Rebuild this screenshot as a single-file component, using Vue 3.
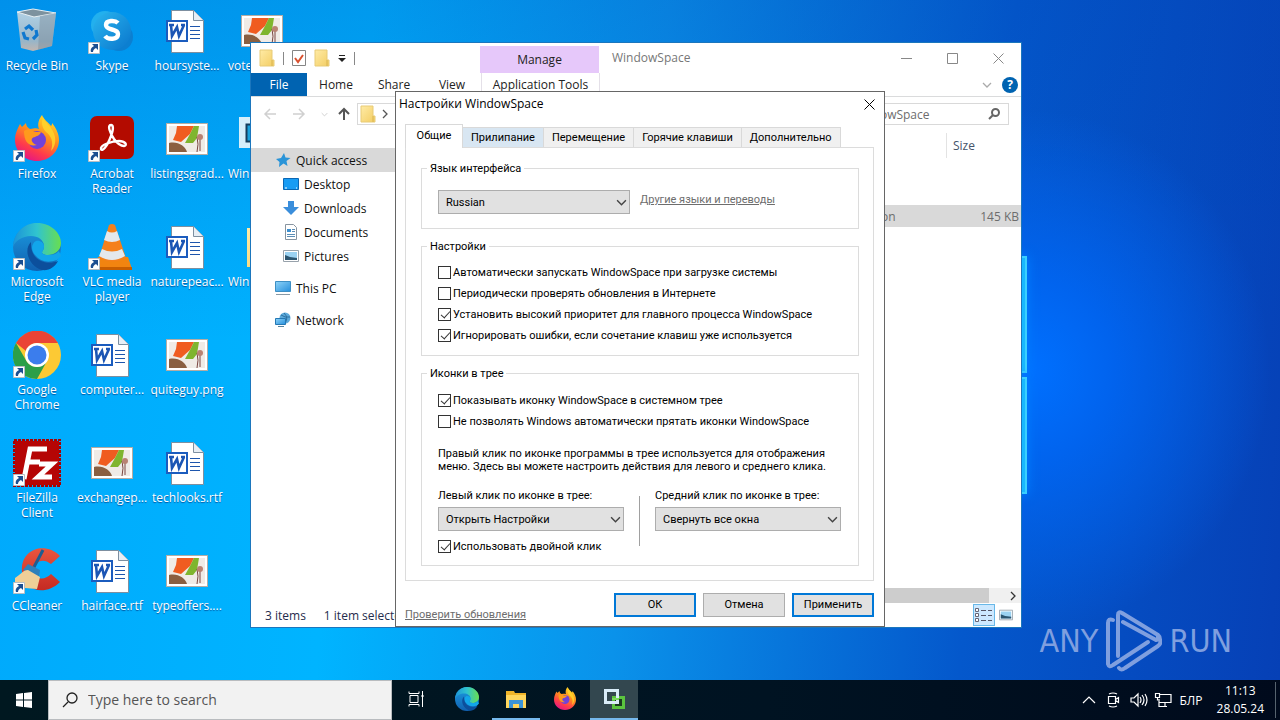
<script setup>
import { ref } from 'vue'

const desktopIcons = [
  { icon: 'bin', label: 'Recycle Bin' },
  { icon: 'firefox', label: 'Firefox', link: true },
  { icon: 'edge', label: 'Microsoft Edge', link: true },
  { icon: 'chrome', label: 'Google Chrome', link: true },
  { icon: 'filezilla', label: 'FileZilla Client', link: true },
  { icon: 'ccleaner', label: 'CCleaner', link: true },
  { icon: 'skype', label: 'Skype', link: true },
  { icon: 'acrobat', label: 'Acrobat Reader', link: true },
  { icon: 'vlc', label: 'VLC media player', link: true },
  { icon: 'word', label: 'computer...' },
  { icon: 'photo', label: 'exchangep...' },
  { icon: 'word', label: 'hairface.rtf' },
  { icon: 'word', label: 'hoursyste...' },
  { icon: 'photo', label: 'listingsgrad...' },
  { icon: 'word', label: 'naturepeac...' },
  { icon: 'photo', label: 'quiteguy.png' },
  { icon: 'word', label: 'techlooks.rtf' },
  { icon: 'photo', label: 'typeoffers....' },
  { icon: 'photo', label: 'votes...', start: true },
  { icon: 'wsapp', label: 'Window...', start: true },
  { icon: 'bigfolder', label: 'Window...', start: true },
]

const quickItems = [
  { icon: 'desk', label: 'Desktop' },
  { icon: 'down', label: 'Downloads' },
  { icon: 'doc', label: 'Documents' },
  { icon: 'pic', label: 'Pictures' },
]

const tabs = ['Общие', 'Прилипание', 'Перемещение', 'Горячие клавиши', 'Дополнительно']
const activeTab = ref(0)

const settings = ref([
  { label: 'Автоматически запускать WindowSpace при загрузке системы', on: false },
  { label: 'Периодически проверять обновления в Интернете', on: false },
  { label: 'Установить высокий приоритет для главного процесса WindowSpace', on: true },
  { label: 'Игнорировать ошибки, если сочетание клавиш уже используется', on: true },
])
const tray = ref([
  { label: 'Показывать иконку WindowSpace в системном трее', on: true },
  { label: 'Не позволять Windows автоматически прятать иконки WindowSpace', on: false },
])
const doubleClick = ref(true)
</script>

<template>
  <div class="screen">
    <svg class="defs" aria-hidden="true">
      <defs>
        <linearGradient id="gBin" x1="0" y1="0" x2="0" y2="1"><stop offset="0" stop-color="#c3d7e4" /><stop offset=".75" stop-color="#a9b9c4" /><stop offset="1" stop-color="#d8b9a8" /></linearGradient>
        <linearGradient id="gSkype" x1="0" y1="0" x2="1" y2="1"><stop offset="0" stop-color="#29b6f0" /><stop offset="1" stop-color="#0a76cc" /></linearGradient>
        <linearGradient id="gFox" x1=".8" y1="0" x2=".3" y2="1"><stop offset="0" stop-color="#ffe226" /><stop offset=".45" stop-color="#ff8a1e" /><stop offset=".75" stop-color="#ff3b4b" /><stop offset="1" stop-color="#e31587" /></linearGradient>
        <linearGradient id="gEdgeA" x1="0" y1="0" x2="1" y2="0"><stop offset="0" stop-color="#1c93d8" /><stop offset=".5" stop-color="#30c4cf" /><stop offset="1" stop-color="#6ade4e" /></linearGradient>
        <linearGradient id="gEdgeB" x1="0" y1="0" x2="0" y2="1"><stop offset="0" stop-color="#1b9de2" /><stop offset="1" stop-color="#1160b0" /></linearGradient>
        <linearGradient id="gFolder" x1="0" y1="0" x2="1" y2="1"><stop offset="0" stop-color="#ffeba6" /><stop offset="1" stop-color="#f3cd62" /></linearGradient>
        <linearGradient id="gScreen" x1="0" y1="0" x2="1" y2="1"><stop offset="0" stop-color="#8ed3f8" /><stop offset="1" stop-color="#268fdc" /></linearGradient>
        <linearGradient id="gCC" x1="0" y1="0" x2="0" y2="1"><stop offset="0" stop-color="#e9553e" /><stop offset="1" stop-color="#c52a22" /></linearGradient>
      </defs>
      <symbol id="i-bin" viewBox="0 0 48 48">
        <path d="M4 5 24 9l19-3-4 33-19 5L8 41Z" fill="url(#gBin)" opacity=".9" />
        <path d="m4 5 16-3 23 4-22 4Z" fill="#7d929f" stroke="#e8f0f4" />
        <path d="m27 9 16-3-4 33-14 4Z" fill="#7c8b99" opacity=".45" />
        <path d="m12 22 4-3 4 4M10 25l2 6 4 1m4 0 4-4-1-5" fill="none" stroke="#0f78cf" stroke-width="3.200" />
      </symbol>
      <symbol id="i-skype" viewBox="0 0 48 48">
        <circle cx="17" cy="18" r="14" fill="#22b0ee" /><circle cx="31" cy="30" r="14" fill="#0c7fd0" /><circle cx="24" cy="24" r="19" fill="url(#gSkype)" />
        <path d="M30 16c-3-3-12-3-12 2 0 6 12 3 12 9 0 6-10 6-13 2" fill="none" stroke="#fff" stroke-width="4.400" />
      </symbol>
      <symbol id="i-firefox" viewBox="0 0 48 48">
        <path d="M29 0c2 5 6 7 9 11 1-1 1-2 1-3 5 6 7 12 7 17 0 12-10 21-22 21S2 37 2 25c0-7 3-12 5-16l2 3 4-4c0 3 2 5 4 6 5-1 7-1 9 0-2-5 0-10 3-14Z" fill="url(#gFox)" />
        <circle cx="24" cy="25" r="9" fill="#7242d8" />
        <path d="M11 16c4-3 8-2 10 1h7c-1 4-5 4-6 5-6 1-3 7 2 8-8 2-13-3-13-14Z" fill="#ff9a1c" />
        <path d="M30 2c2 6 10 10 12 20 1 6-1 11-4 14 3-10 0-15-5-19-4-4-5-9-3-15Z" fill="#ffd52b" opacity=".85" />
      </symbol>
      <symbol id="i-edge" viewBox="0 0 48 48">
        <circle cx="24" cy="24" r="24" fill="url(#gEdgeB)" />
        <path d="M0 24C1 10 11 0 24 0c14 0 24 10 24 20 0 8-7 12-13 12-5 0-6-2-6-3 1-2 2-3 2-6 0-6-6-10-13-10C9 13 2 18 0 24Z" fill="url(#gEdgeA)" />
        <path d="M31 23c0 3-1 4-2 6 0 1 1 3 6 3 5 0 8-1 11-4l2 5-4 4q-14 5-22-5c-5-6-3-12 1-14 4-1 8 2 8 5Z" fill="#12a6ea" />
        <path d="M18 19c-8 8-2 24 11 28 7 1 13-3 16-9-9 4-20 1-24-6-3-5-3-9-3-13Z" fill="#0c4f9c" />
      </symbol>
      <symbol id="i-chrome" viewBox="0 0 48 48">
        <circle cx="24" cy="24" r="24" fill="#fcc934" />
        <path d="M3 12A24 24 0 0 1 45 12H24a12 12 0 0 0-11 8Z" fill="#ea4335" />
        <path d="M3 12a24 24 0 0 0 21 36l10-18a12 12 0 0 1-20 1Z" fill="#2c9f48" />
        <circle cx="24" cy="24" r="12" fill="#fff" /><circle cx="24" cy="24" r="9.500" fill="#3b7ded" />
      </symbol>
      <symbol id="i-filezilla" viewBox="0 0 48 48">
        <rect x="2" y="2" width="44" height="44" fill="#b50505" /><rect x="1" y="1" width="46" height="46" fill="none" stroke="#a80000" stroke-width="2" stroke-dasharray="3 1" />
        <path d="M11 40 17 10h17M13 23h14M26 25h13L25 38h14" fill="none" stroke="#fff" stroke-width="5" />
      </symbol>
      <symbol id="i-ccleaner" viewBox="0 0 48 48">
        <path d="M47 9C32-6 7 2 9 25c2 20 24 24 38 10l-9-8c-7 7-16 6-16-4s9-12 16-6Z" fill="url(#gCC)" />
        <path d="m30 3-9 17" stroke="#1d5d91" stroke-width="3" /><path d="m15 17 12 6-1 8-16-8Z" fill="#2e80bb" />
        <path d="M2 31c5-3 8-8 13-8l12 7-3 12-12-1-10 2Z" fill="#efcf98" />
      </symbol>
      <symbol id="i-acrobat" viewBox="0 0 48 48">
        <rect x="2" y="1" width="44" height="43" rx="7" fill="#b30b00" />
        <path d="M23 10c-4 0-1 8 3 14 3 4 7 7 10 7 4-1 1-5-5-5-7 0-19 4-18 8 1 3 6-2 10-13 3-8 2-11 0-11Z" fill="none" stroke="#fff" stroke-width="2.400" />
      </symbol>
      <symbol id="i-vlc" viewBox="0 0 48 48">
        <path d="m10 34-4 12h38l-4-12Z" fill="#f28410" /><path d="M6 44h38v3H6Z" fill="#c95e00" />
        <path d="M21 2q3-2 6 0l11 33q-13 7-27 0Z" fill="#f5801b" />
        <path d="m19 8-3 9q8 4 16 0l-3-9q-5 3-10 0Zm-5 18-3 7q13 8 26 0l-3-7q-10 5-20 0Z" fill="#e4e8ec" />
      </symbol>
      <symbol id="i-word" viewBox="0 0 48 48">
        <path d="M8.500 3.500h22l10 10v32h-32Z" fill="#fff" stroke="#7d8fa0" /><path d="M30.500 3.500v10h10" fill="#e7eef5" stroke="#7d8fa0" />
        <path d="M27 19.500h10M27 23.500h10M27 27.500h10M27 31.500h10" stroke="#1e56ad" />
        <rect x="4" y="14" width="20" height="20" fill="#fff" stroke="#1b5cbe" stroke-width="2" />
        <path d="m8 18 1 11 5-9 2 9 5-11M6 18h5m7 0h4" fill="none" stroke="#1b55b4" stroke-width="2.600" />
      </symbol>
      <symbol id="i-photo" viewBox="0 0 48 48">
        <rect x="3.500" y="8.500" width="41" height="31" fill="#fff" stroke="#b4aca4" /><rect x="6" y="11" width="36" height="26" fill="#f0ebe6" />
        <path d="m14 11 17 0-4 8-9 8-8-2 3-7Z" fill="#f05c20" /><path d="m31 11 5 0-2 12-4 5-8 0 5-9Z" fill="#7fb52e" />
        <path d="M6 28c9-2 16 3 18 9H6Z" fill="#8a5f41" /><path d="M34 22q2 7 0 15m3-14v13" stroke="#7a4540" fill="none" /><circle cx="37" cy="22" r="3" fill="#b98272" />
      </symbol>
      <symbol id="i-wsapp" viewBox="0 0 48 48">
        <rect x="1" y="2" width="46" height="31" fill="#d6effa" /><rect x="8.500" y="9.500" width="20" height="17" fill="#1aa2dc" stroke="#173e5c" stroke-width="2" />
      </symbol>
      <symbol id="i-bigfolder" viewBox="0 0 48 48"><path d="M9 5h14l4 4h17v35H9Z" fill="url(#gFolder)" /></symbol>
      <symbol id="i-link" viewBox="0 0 12 12"><path d="M.5.500h11v11H.500Z" fill="#fff" stroke="#b8bec4" /><path d="M4 2h6v6L8 6c-2 1-3 2-3 4H3c-1-3 1-5 3-6Z" fill="#1c4f91" /></symbol>
      <symbol id="i-folder" viewBox="0 0 16 18"><path d="M1 1h12v10h2v6H1Z" fill="url(#gFolder)" stroke="#e8cb76" /><path d="M13 11v6" stroke="#d8b450" /></symbol>
      <symbol id="i-star" viewBox="0 0 16 16"><path d="m9 1 1.500 4.500 5 .5-4 3 1 5-4-2.500L4 15l.5-5L1 7l5-1Z" fill="#2a94d8" /></symbol>
      <symbol id="i-desk" viewBox="0 0 16 16"><path d="M.5 2.500h15v11H.500Z" fill="#189cf4" stroke="#0b67b4" /><path d="M2 12h2m9 0h1" stroke="#fff" /></symbol>
      <symbol id="i-down" viewBox="0 0 16 16"><path d="M5 1h6v6h5l-8 8-8-8h5Z" fill="#3a8edb" /></symbol>
      <symbol id="i-doc" viewBox="0 0 16 16"><path d="M2.500.500h8l3 3v12h-11Z" fill="#fff" stroke="#8794a0" /><path d="M4 5h4v3H4Z" fill="#3b8fd0" /><path d="M9 5.500h3M4 10.500h8M4 12.500h8M9 7.500h3" stroke="#5b8db5" /></symbol>
      <symbol id="i-pic" viewBox="0 0 16 16"><path d="M.5 2.500h15v11H.500Z" fill="#fff" stroke="#98a2ab" /><path d="M2 4h12v8H2Z" fill="#9bd2f2" /><path d="m2 7 5 2 7 1v2H2Z" fill="#2c5570" /></symbol>
      <symbol id="i-pc" viewBox="0 0 16 16"><path d="M.5 1.500h15v10H.500Z" fill="url(#gScreen)" stroke="#3d8fc4" /><path d="M1 14.500h14" stroke="#8999a5" /></symbol>
      <symbol id="i-net" viewBox="0 0 16 16"><circle cx="10" cy="6" r="5.500" fill="#5daadb" /><path d="M6 3q4 3 9 2M9 1q5 5 1 10" stroke="#2a6f9f" fill="none" /><path d="M.5 6.500h10v6H.500Z" fill="url(#gScreen)" stroke="#2478b4" /><path d="M3 14.500h6" stroke="#56839e" /></symbol>
      <symbol id="i-chev" viewBox="0 0 10 10"><path d="m1 3 4 4 4-4" fill="none" stroke="currentColor" stroke-width="1.300" /></symbol>
    </svg>

    <main class="desktop">
      <ul class="icons">
        <li v-for="(d, i) in desktopIcons" :key="i" :class="{ start: d.start }">
          <div class="pict">
            <svg class="big"><use :href="'#i-' + d.icon" /></svg>
            <svg v-if="d.link" class="arrow"><use href="#i-link" /></svg>
          </div>
          <span>{{ d.label }}</span>
        </li>
      </ul>

      <div class="pane p1"></div>
      <div class="pane p2"></div>

      <div class="mark">
        <span>ANY</span>
        <svg viewBox="0 0 57 64"><g fill="none" stroke="currentColor" stroke-width="4" stroke-linecap="round" stroke-linejoin="round"><path d="M8 11q-5-2-5 3v41q1 4 5 1l35-23" /><path d="M13 47V6q0-4 4-2l36 22q4 4-2 5L18 13" /><path d="M14 59q2 3 6 0l33-22q5-4 0-9" /></g></svg>
        <span>RUN</span>
      </div>

      <section class="explorer">
        <header class="titlebar">
          <div class="quick">
            <svg class="fold"><use href="#i-folder" /></svg><i class="bar"></i>
            <svg class="props" viewBox="0 0 14 16"><path d="M.5.500h13v15H.500Z" fill="#fff" stroke="#858585" /><path d="m3 8 3 4 5-7" fill="none" stroke="#d9502e" stroke-width="2" /></svg>
            <svg class="fold"><use href="#i-folder" /></svg>
            <svg class="cust" viewBox="0 0 8 8"><path d="M1 1.500h6" stroke="#222" /><path d="M0 4h8L4 8Z" fill="#222" /></svg><i class="bar"></i>
          </div>
          <div class="manage">Manage</div>
          <div class="wtitle">WindowSpace</div>
          <button class="ctl" aria-label="Minimize"><svg viewBox="0 0 11 11"><path d="M0 5.500h11" /></svg></button>
          <button class="ctl" aria-label="Maximize"><svg viewBox="0 0 11 11"><path d="M.5.500h10v10H.500Z" /></svg></button>
          <button class="ctl" aria-label="Close"><svg viewBox="0 0 11 11"><path d="m.5.500 10 10m0-10-10 10" /></svg></button>
        </header>
        <nav class="ribbon">
          <button class="file">File</button>
          <button>Home</button>
          <button>Share</button>
          <button>View</button>
          <button class="apptools">Application Tools</button>
          <svg class="rchev"><use href="#i-chev" /></svg>
          <button class="help" aria-label="Help">?</button>
        </nav>
        <div class="address">
          <svg class="nav" viewBox="0 0 14 14"><path d="M13 7H2m5-5L2 7l5 5" /></svg>
          <svg class="nav" viewBox="0 0 14 14"><path d="M1 7h11M7 2l5 5-5 5" /></svg>
          <svg class="tiny"><use href="#i-chev" /></svg>
          <svg class="nav up" viewBox="0 0 14 14"><path d="M7 13V2M2 7l5-5 5 5" /></svg>
          <div class="path"><svg class="fold"><use href="#i-folder" /></svg><svg class="crumb"><use href="#i-chev" /></svg></div>
          <label class="search">
            <input type="text" placeholder="Search WindowSpace" aria-label="Search WindowSpace" />
            <svg viewBox="0 0 12 12"><circle cx="7.500" cy="4.500" r="3.500" /><path d="m5 7-4 4" /></svg>
          </label>
        </div>
        <div class="body">
          <ul class="tree">
            <li class="sel"><svg><use href="#i-star" /></svg>Quick access</li>
            <li v-for="q in quickItems" :key="q.label" class="sub"><svg><use :href="'#i-' + q.icon" /></svg>{{ q.label }}</li>
            <li class="gap"><svg><use href="#i-pc" /></svg>This PC</li>
            <li class="gap"><svg><use href="#i-net" /></svg>Network</li>
          </ul>
          <div class="files">
            <table>
              <colgroup><col /><col class="ctype" /><col class="csize" /></colgroup>
              <thead><tr><th></th><th></th><th><span>Size</span></th></tr></thead>
              <tbody>
                <tr><td></td><td></td><td></td></tr>
                <tr><td></td><td></td><td></td></tr>
                <tr class="sel"><td></td><td>Application</td><td class="num">145 KB</td></tr>
              </tbody>
            </table>
            <div class="scroll"><div class="thumb"></div><svg><use href="#i-chev" /></svg></div>
          </div>
        </div>
        <footer class="status">
          <span>3 items</span><span>1 item selected</span>
          <button class="view on" aria-label="Details"><svg viewBox="0 0 18 14"><path d="M.5.500h3v3h-3Zm0 5h3v3h-3Zm0 5h3v3h-3Z" fill="#fff" stroke="#667" /><path d="M6 2.500h5m2 0h4M6 7.500h5m2 0h4M6 12.500h5m2 0h4" stroke="#556" /></svg></button>
          <button class="view" aria-label="Large icons"><svg viewBox="0 0 16 16"><use href="#i-pic" /></svg></button>
        </footer>
      </section>

      <section class="dialog" role="dialog" aria-labelledby="dlg-title">
        <header class="dtitle">
          <h1 id="dlg-title">Настройки WindowSpace</h1>
          <button aria-label="Закрыть"><svg viewBox="0 0 11 11"><path d="m.5.500 10 10m0-10-10 10" /></svg></button>
        </header>
        <div class="tabs" role="tablist">
          <button v-for="(t, i) in tabs" :key="t" role="tab" :aria-selected="activeTab === i" :class="{ active: activeTab === i, hover: i === 1 }" @click="activeTab = i">{{ t }}</button>
        </div>
        <div class="sheet">
          <fieldset class="lang">
            <legend>Язык интерфейса</legend>
            <span class="select wide"><select aria-label="Язык интерфейса"><option>Russian</option></select><svg><use href="#i-chev" /></svg></span>
            <a href="#">Другие языки и переводы</a>
          </fieldset>
          <fieldset class="opts">
            <legend>Настройки</legend>
            <label v-for="s in settings" :key="s.label"><input v-model="s.on" type="checkbox" />{{ s.label }}</label>
          </fieldset>
          <fieldset class="trayset">
            <legend>Иконки в трее</legend>
            <label v-for="s in tray" :key="s.label"><input v-model="s.on" type="checkbox" />{{ s.label }}</label>
            <p>Правый клик по иконке программы в трее используется для отображения<br />меню. Здесь вы можете настроить действия для левого и среднего клика.</p>
            <div class="cols">
              <div>
                <label class="cap" for="left">Левый клик по иконке в трее:</label>
                <span class="select"><select id="left"><option>Открыть Настройки</option></select><svg><use href="#i-chev" /></svg></span>
              </div>
              <div class="divider"></div>
              <div>
                <label class="cap" for="mid">Средний клик по иконке в трее:</label>
                <span class="select"><select id="mid"><option>Свернуть все окна</option></select><svg><use href="#i-chev" /></svg></span>
              </div>
            </div>
            <label><input v-model="doubleClick" type="checkbox" />Использовать двойной клик</label>
          </fieldset>
        </div>
        <footer class="actions">
          <a href="#">Проверить обновления</a>
          <button class="blue">ОК</button>
          <button>Отмена</button>
          <button class="blue">Применить</button>
        </footer>
      </section>
    </main>

    <footer class="taskbar">
      <button class="win" aria-label="Start"><svg viewBox="0 0 16 16"><path d="m0 2 7-1v6.500H0Zm8-1 8-1v7.500H8ZM0 8.500h7V15l-7-1Zm8 0h8V16l-8-1Z" fill="#fff" /></svg></button>
      <label class="tsearch">
        <svg viewBox="0 0 16 16"><circle cx="10" cy="6" r="5" /><path d="m6 10-5 5" /></svg>
        <input type="text" placeholder="Type here to search" aria-label="Type here to search" />
      </label>
      <button class="task first" aria-label="Task View"><svg class="tv" viewBox="0 0 16 16"><path d="M2 4.500h8v7H2ZM1 .500v2h10v-2M1 15.500v-2h10v2M14.500 0v16M13 5h3" fill="none" stroke="#fff" /></svg></button>
      <button class="task" aria-label="Microsoft Edge"><svg><use href="#i-edge" /></svg></button>
      <button class="task open" aria-label="File Explorer"><svg class="fe" viewBox="0 0 22 20"><path d="M1 2h8l1 2h11v15H1Z" fill="#f0b429" /><path d="M1 6h20v13H1Z" fill="#ffd65c" /><path d="M4 19v-8h14v8h-4v-4H8v4Z" fill="#3a94d8" /></svg></button>
      <button class="task" aria-label="Firefox"><svg><use href="#i-firefox" /></svg></button>
      <button class="task open active" aria-label="WindowSpace"><svg viewBox="0 0 24 24"><path d="M11.500 10.500h10v10h-10Z" fill="#1b3b20" stroke="#5bc43f" stroke-width="3" /><path d="M3.500 3.500h12v12h-12Z" fill="none" stroke="#d9ecf8" stroke-width="3" /><path d="M10 12h7" stroke="#7cd95d" stroke-width="2" /></svg></button>
      <div class="tray">
        <svg viewBox="0 0 14 14"><path d="m1 10 6-6 6 6" /></svg>
        <svg viewBox="0 0 14 16"><path d="M2.500 4.500h7v7h-7Zm7 3 3-2v5l-3-2M3 2q4-2 8 0M3 14q4 2 8 0" /></svg>
        <svg class="wide" viewBox="0 0 18 14"><path d="M1 5h3l4-4v12L4 9H1Zm9-1q2 3 0 6m2-8q4 5 0 10m3-11q4 6 0 12" /></svg>
        <svg class="wide" viewBox="0 0 18 16"><path d="M6 2.500h11v8H5M5 7v7.500h8M11 11v3M1.500 1.500h4v4h-4Zm2 4v3" /></svg>
        <span class="lng">БЛР</span>
        <time>11:13<br />28.05.24</time>
      </div>
    </footer>
  </div>
</template>

<style>
body { overflow: hidden; }
</style>

<style scoped>
.screen { display: flex; flex-direction: column; min-height: 100vh; font: 12px/15px "Open Sans", "Noto Sans", sans-serif; }
.screen * { box-sizing: border-box; }
.defs { position: absolute; width: 0; height: 0; }
button, input, select { font: inherit; color: inherit; margin: 0; padding: 0; border: 0; background: none; border-radius: 0; outline: 0; }
ul { list-style: none; margin: 0; padding: 0; }
svg { display: block; flex: none; }

.desktop {
  position: relative; flex: 1; overflow: hidden;
  background:
    radial-gradient(ellipse 240px 260px at 1030px 370px, #0070ff 0, #0068f8cc 35%, #0060f000 100%),
    linear-gradient(to bottom, #0048b840 0, #0048b800 50%),
    linear-gradient(95deg, #00a9fc 0, #00b4ff 28%, #0a92ea 50%, #0458cc 76%, #0640b6 100%);
}
.icons { display: grid; grid-auto-flow: column; grid-template-rows: repeat(6, 108px); grid-auto-columns: 75px; width: max-content; }
.icons li { display: flex; flex-direction: column; align-items: center; padding: 7px 1px 0 0; color: #fff; text-align: center; text-shadow: 0 1px 1px #0056a0; white-space: nowrap; }
.icons span { margin-top: 3px; width: 66px; white-space: normal; overflow-wrap: normal; display: flex; justify-content: center; }
.icons .start span { justify-content: flex-start; width: 68px; white-space: nowrap; }
.pict { position: relative; }
.big { width: 48px; height: 48px; }
.arrow { position: absolute; left: 0; top: 35px; width: 12px; height: 12px; }
.pane { position: absolute; left: 1000px; width: 27px; height: 117px; background: #18b8ff; border: 2px solid #3ad0ff; box-shadow: 0 0 12px #0080ff; }
.p1 { top: 256px; }
.p2 { top: 377px; }
.mark { position: absolute; right: 48px; bottom: 7px; display: flex; align-items: center; gap: 7px; color: #7f9fdf; font: 32px/64px "Liberation Sans Narrow", "DejaVu Sans Condensed", sans-serif; }
.mark svg { width: 57px; height: 64px; }

.explorer { position: absolute; left: 250px; top: 42px; width: 772px; height: 586px; display: flex; flex-direction: column; background: #fff; border: 1px solid #1b76bd; color: #222; }
.titlebar { display: flex; height: 30px; }
.quick { display: flex; align-items: center; width: 229px; padding-left: 8px; gap: 8px; }
.quick .bar { width: 1px; height: 13px; background: #888; }
.fold { width: 16px; height: 18px; }
.props { width: 14px; height: 16px; }
.cust { width: 8px; height: 8px; }
.manage { width: 119px; margin-top: 3px; background: #e6c8fa; text-align: center; line-height: 28px; }
.wtitle { flex: 1; padding-left: 13px; line-height: 30px; color: #777; }
.ctl { width: 46px; display: grid; place-items: center; }
.ctl svg { width: 11px; height: 11px; fill: none; stroke: #888; }
.ribbon { display: flex; align-items: center; height: 24px; border-bottom: 1px solid #dadbdc; }
.ribbon button { width: 58px; height: 23px; }
.ribbon .file { width: 56px; background: #0063b1; color: #fff; }
.ribbon .apptools { width: 119px; border: 1px solid #e4e0e8; border-width: 0 1px; }
.rchev { width: 10px; height: 10px; margin-left: auto; color: #aaa; }
.ribbon .help { width: 16px; height: 16px; margin: 0 3px 0 10px; border-radius: 50%; background: #0063b1; color: #fff; font-weight: 700; line-height: 15px; }
.address { display: flex; align-items: center; height: 34px; padding: 0 12px; }
.nav { width: 14px; height: 14px; margin-right: 15px; fill: none; stroke: #d0d0d0; stroke-width: 1.5; }
.nav.up { margin: 0 6px 0 9px; stroke: #555; stroke-width: 2; }
.tiny { width: 7px; height: 7px; color: #ccc; }
.path { display: flex; align-items: center; flex: 1; height: 22px; padding-left: 2px; gap: 4px; border: 1px solid #d9d9d9; }
.crumb { width: 10px; height: 10px; transform: rotate(-90deg); color: #555; }
.search { display: flex; align-items: center; width: 206px; height: 22px; margin-left: 8px; padding: 0 8px 0 6px; border: 1px solid #d9d9d9; }
.search input { flex: 1; min-width: 0; }
.search input::placeholder { color: #6d6d6d; opacity: 1; }
.search svg { width: 12px; height: 12px; fill: none; stroke: #666; stroke-width: 2; }
.body { display: flex; flex: 1; min-height: 0; }
.tree { width: 146px; padding-top: 17px; color: #111; }
.tree li { display: flex; align-items: center; height: 24px; padding-left: 24px; gap: 5px; }
.tree svg { width: 16px; height: 16px; }
.tree .sub { padding-left: 32px; }
.tree .sel, .files .sel { background: #d9d9d9; }
.tree .gap { margin-top: 8px; }
.files { display: flex; flex-direction: column; flex: 1; }
table { width: 100%; border-collapse: collapse; table-layout: fixed; }
.ctype { width: 119px; }
.csize { width: 75px; }
th { height: 30px; padding: 2px 0 3px; font-weight: 400; text-align: left; color: #45546b; }
th span { display: block; border-left: 1px solid #e3e3e3; padding-left: 6px; line-height: 25px; }
td { height: 22px; padding: 0 2px 0 6px; color: #6d6d6d; }
.num { text-align: right; white-space: nowrap; }
.scroll { display: flex; align-items: center; justify-content: space-between; height: 15px; margin-top: auto; background: #f0f0f0; }
.scroll .thumb { width: calc(100% - 32px); height: 15px; background: #cdcdcd; }
.scroll svg { width: 10px; height: 10px; margin-right: 3px; transform: rotate(-90deg); color: #333; stroke-width: 2; }
.status { display: flex; align-items: center; height: 24px; padding: 0 4px 0 14px; gap: 18px; color: #1f2c4d; }
.view { display: grid; place-items: center; width: 22px; height: 22px; }
.view svg { width: 14px; height: 14px; }
.view.on { margin-left: auto; margin-right: -18px; background: #cce8ff; border: 1px solid #68b8e8; }
.view.on svg { width: 18px; height: 14px; }

.dialog { position: absolute; left: 395px; top: 91px; width: 490px; display: flex; flex-direction: column; padding: 0 10px 4px 9px; background: #fff; border: 1px solid #666; color: #000; font: 11px/14px Roboto, "Noto Sans", sans-serif; }
.dtitle { display: flex; align-items: center; justify-content: space-between; height: 24px; margin: 0 -1px 8px -6px; }
.dtitle h1 { margin: 0; font: 12px/24px "Open Sans", "Noto Sans", sans-serif; }
.dtitle svg { width: 11px; height: 11px; fill: none; stroke: #000; }
.tabs { display: flex; align-items: flex-end; height: 23px; }
.tabs button { height: 20px; flex: none; padding: 1px 8px 0; background: #f0f0f0; border: 1px solid #d9d9d9; border-width: 1px 1px 0 0; white-space: nowrap; }
.tabs .hover { background: #d8e6f2; }
.tabs .active { width: 58px; height: 24px; margin-bottom: -1px; padding-bottom: 3px; background: #fff; border-width: 1px 1px 0 1px; position: relative; }
.sheet { padding: 14px 14px 14px 15px; border: 1px solid #dcdcdc; }
fieldset { margin: 0 0 11px; padding: 0 16px; border: 1px solid #dcdcdc; min-width: 0; }
legend { margin-left: -11px; padding: 0 3px; line-height: 13px; }
.lang { display: flex; align-items: flex-start; gap: 10px; height: 67px; padding-top: 15px; }
a { color: #6d6d6d; text-decoration: underline; }
.lang a { margin-top: 3px; }
.select { position: relative; display: block; width: 186px; height: 24px; }
.select.wide { width: 192px; }
.select select { width: 100%; height: 100%; padding: 1px 20px 0 7px; appearance: none; background: #e1e1e1; border: 1px solid #adadad; }
.select svg { position: absolute; right: 3px; top: 7px; width: 11px; height: 11px; color: #444; pointer-events: none; }
.opts { height: 116px; padding-top: 9px; }
fieldset label { display: flex; align-items: center; height: 21px; gap: 2px; white-space: nowrap; }
input[type="checkbox"] { position: relative; width: 13px; height: 13px; appearance: none; border: 1px solid #333; background: #fff; }
input[type="checkbox"]:checked::after { content: ""; position: absolute; left: 4px; top: 0; width: 4px; height: 8px; border: solid #333; border-width: 0 1px 1px 0; transform: rotate(42deg); }
.trayset { margin: 0; height: 199px; padding-top: 10px; }
.trayset p { margin: 15px 0 16px; line-height: 13px; white-space: nowrap; }
.cols { display: flex; }
fieldset .cap { height: 14px; margin-bottom: 4px; }
.divider { width: 1px; height: 50px; margin: 7px 15px 0; background: #a0a0a0; }
.cols + label { margin-top: -10px; }
.actions { display: flex; align-items: flex-start; gap: 7px; margin-top: 12px; }
.actions a { margin-right: auto; padding-top: 15px; }
.actions button { width: 82px; height: 24px; background: #e1e1e1; border: 1px solid #adadad; }
.actions .blue { border: 2px solid #0078d7; }

.taskbar { display: flex; height: 40px; background: linear-gradient(to right, #001820, #001322 60%, #000a1c); color: #fff; }
.win { width: 48px; display: grid; place-items: center; }
.win svg { width: 16px; height: 16px; }
.tsearch { display: flex; align-items: center; width: 344px; padding-left: 13px; gap: 10px; background: #f2f2f2; border: 1px solid #b9bcbf; }
.tsearch svg { width: 16px; height: 16px; fill: none; stroke: #222; stroke-width: 1.3; }
.tsearch input { flex: 1; font-size: 14px; line-height: 22px; }
.tsearch input::placeholder { color: #555; opacity: 1; }
.task { display: grid; place-items: center; width: 48px; margin-right: 1px; border-bottom: 2px solid transparent; }
.task.first { margin-right: 3px; }
.task svg { width: 24px; height: 24px; }
.task .tv { width: 16px; height: 16px; }
.task .fe { width: 22px; height: 20px; }
.task.open { border-color: #76b9ed; }
.task.active { background: #33474f; }
.tray { display: flex; align-items: center; gap: 10px; margin-left: auto; padding-right: 4px; }
.tray svg { width: 14px; height: 16px; fill: none; stroke: #fff; stroke-width: 1.2; }
.tray svg.wide { width: 18px; height: 16px; margin-right: -4px; }
.lng { margin-left: 2px; }
time { padding-right: 11px; border-right: 1px solid #56636e; text-align: center; line-height: 18px; margin-left: 4px; }
</style>
